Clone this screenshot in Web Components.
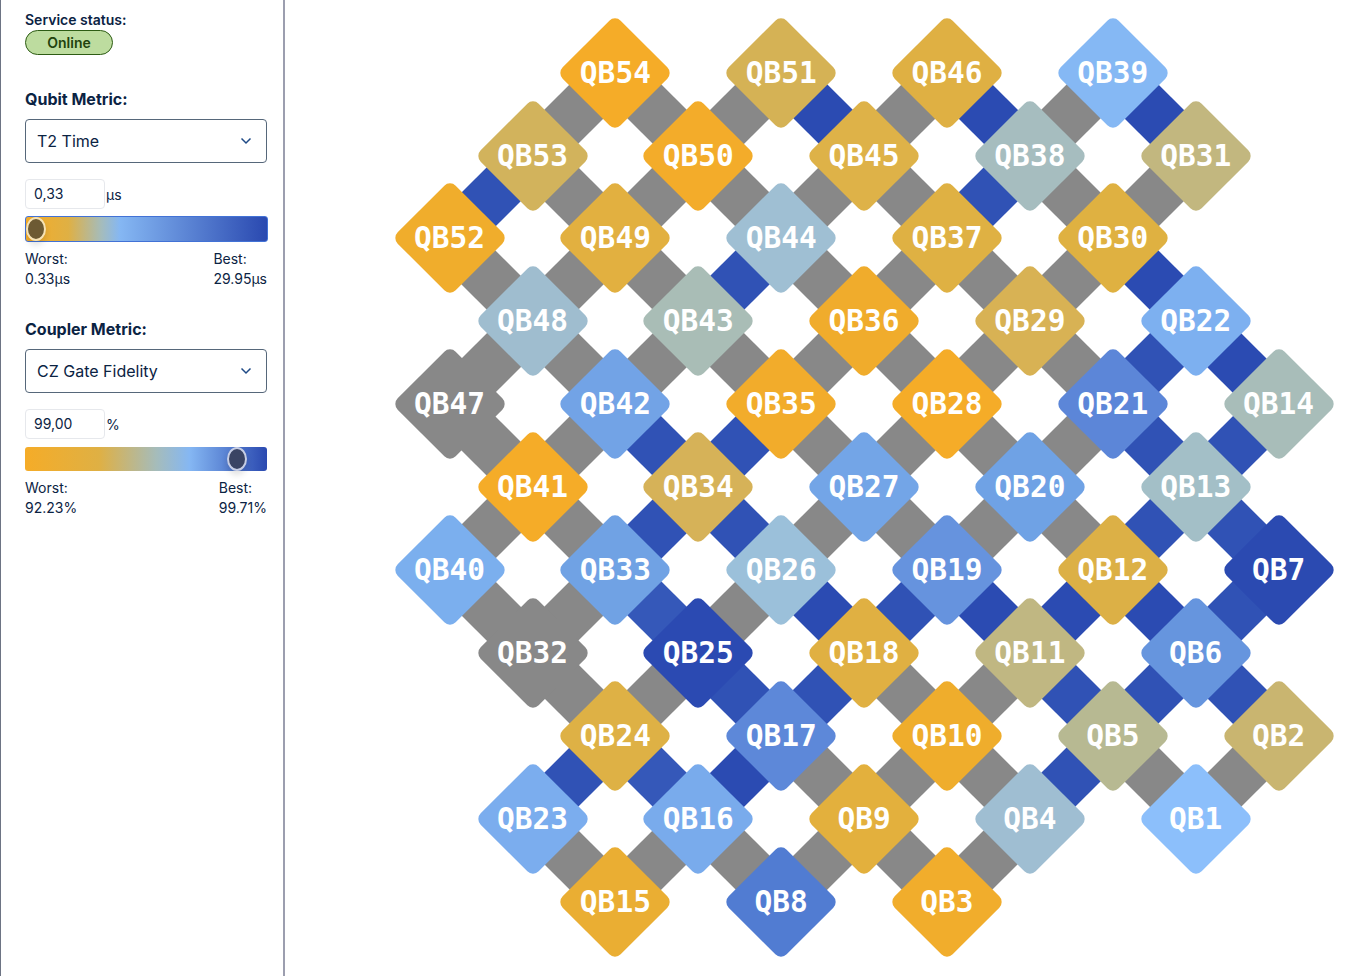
<!DOCTYPE html>
<html>
<head>
<meta charset="utf-8">
<title>Chip map</title>
<style>
  html, body { margin: 0; height: 100%; background: #fff; }
  body { display: flex; font-family: "Inter", "Liberation Sans", sans-serif; color: #0b2343; overflow: hidden; }
</style>
</head>
<body>
  <side-bar>
    <status-pill>Online</status-pill>
    <metric-panel heading="Qubit Metric:" choice="T2 Time" value="0,33" unit="µs" stop="39" thumb="10"
      worst="0.33µs" best="29.95µs" focused></metric-panel>
    <metric-panel heading="Coupler Metric:" choice="CZ Gate Fidelity" value="99,00" unit="%" stop="68" thumb="212"
      thumb-color="#3a4464" ring="#c6cde4" worst="92.23%" best="99.71%"></metric-panel>
  </side-bar>
  <chip-map></chip-map>

<script>
// Sidebar shell
class SideBar extends HTMLElement {
  constructor() {
    super();
    this.attachShadow({ mode: "open" }).innerHTML = `
      <style>
        :host {
          display: block;
          box-sizing: border-box;
          width: 285px;
          height: 976px;
          flex: none;
          padding: 12px 16px 0 24px;
          border-left: 1px solid #6d7484;
          border-right: 2px solid #9c9eaf;
        }
        .label { font-size: 14px; font-weight: 600; line-height: 16px; }
      </style>
      <div class="label">Service status:</div>
      <slot></slot>
    `;
  }
}

class StatusPill extends HTMLElement {
  constructor() {
    super();
    this.attachShadow({ mode: "open" }).innerHTML = `
      <style>
        :host {
          display: flex;
          align-items: center;
          justify-content: center;
          box-sizing: border-box;
          width: 88px;
          height: 25px;
          margin-top: 2px;
          background: #bddc9f;
          border: 1px solid #2d5c14;
          border-radius: 13px;
          color: #22430d;
          font-size: 14px;
          font-weight: 600;
        }
      </style>
      <slot></slot>
    `;
  }
}

// One metric block: heading, dropdown, threshold input, gradient slider, worst/best
class MetricPanel extends HTMLElement {
  connectedCallback() {
    const a = (n, d) => this.getAttribute(n) || d;
    const p = Number(a("stop", 50));
    const thumb = Number(a("thumb", 0));
    const focused = this.hasAttribute("focused");
    this.attachShadow({ mode: "open" }).innerHTML = `
      <style>
        :host { display: block; margin-top: 36px; }
        :host(:last-child) { margin-top: 32px; }
        h2 { margin: 0; font-size: 16px; font-weight: 700; line-height: 16px; height: 24px; padding-top: 0; }
        .select {
          display: flex;
          align-items: center;
          justify-content: space-between;
          box-sizing: border-box;
          width: 242px;
          height: 44px;
          padding: 0 14px 0 11px;
          background: #fff;
          border: 1px solid #56677a;
          border-radius: 4px;
          font-size: 16px;
          margin-top: 4px;
        }
        .value { display: flex; align-items: center; margin-top: 16px; font-size: 14px; }
        .input {
          box-sizing: border-box;
          width: 80px;
          height: 30px;
          padding: 0 8px;
          line-height: 28px;
          border: 1px solid #e6e8ec;
          border-radius: 4px;
        }
        .unit { margin-left: 1px; }
        .track {
          position: relative;
          box-sizing: border-box;
          width: ${focused ? 243 : 242}px;
          height: ${focused ? 26 : 24}px;
          margin-top: ${focused ? 7 : 8}px;
          border-radius: 3px;
          background: linear-gradient(90deg, #f5ac28 0%, #dfb044 ${p * 0.45}%, #a5bcbb ${p * 0.8}%, #85b7f3 ${p}%, #2a49b0 100%);
          ${focused ? "border: 1.5px solid #4272d6;" : ""}
        }
        .thumb {
          position: absolute;
          left: ${thumb - 10}px;
          top: 50%;
          box-sizing: border-box;
          width: 20px;
          height: 24px;
          margin-top: -12px;
          border-radius: 50%;
          background: ${a("thumb-color", "#6d5a33")};
          border: 2px solid ${a("ring", "#f6e2b4")};
          box-shadow: 0 4px 6px rgba(0, 0, 0, 0.12);
        }
        .ends { display: flex; justify-content: space-between; width: 242px; margin-top: 7px; font-size: 14px; line-height: 20px; }
      </style>
      <h2>${a("heading")}</h2>
      <div class="select">
        <span>${a("choice")}</span>
        <svg width="12" height="8" viewBox="0 0 12 8"><path d="M1.5 1.5 6 6l4.5-4.5" fill="none" stroke="#1f4a86" stroke-width="1.5"/></svg>
      </div>
      <div class="value"><div class="input">${a("value")}</div><span class="unit">${a("unit")}</span></div>
      <div class="track"><div class="thumb"></div></div>
      <div class="ends">
        <div>Worst:<br>${a("worst")}</div>
        <div>Best:<br>${a("best")}</div>
      </div>
    `;
  }
}

// Grid pitch of the chip, in pixels
const STEP = 82.9;
const X0 = 164.6;
const Y0 = 72.6;

class QubitNode extends HTMLElement {
  connectedCallback() {
    const col = Number(this.getAttribute("col"));
    const row = Number(this.getAttribute("row"));
    this.attachShadow({ mode: "open" }).innerHTML = `
      <style>
        :host {
          position: absolute;
          left: ${X0 + col * STEP - 41}px;
          top: ${Y0 + row * STEP - 41}px;
          width: 82px;
          height: 82px;
          display: flex;
          align-items: center;
          justify-content: center;
          font: bold 29.5px "DejaVu Sans Mono", monospace;
          color: #fff;
        }
        .shape {
          position: absolute;
          inset: 0;
          border-radius: 8px;
          background: ${this.getAttribute("color")};
          transform: rotate(45deg);
        }
        span { position: relative; }
      </style>
      <div class="shape"></div>
      <span><slot></slot></span>
    `;
  }
}

class CouplerLink extends HTMLElement {
  connectedCallback() {
    // col,row is the upper end; dir is -1 (down left) or 1 (down right)
    const col = Number(this.getAttribute("col"));
    const row = Number(this.getAttribute("row"));
    const dir = Number(this.getAttribute("dir"));
    const cx = X0 + (col + dir / 2) * STEP;
    const cy = Y0 + (row + 0.5) * STEP;
    this.attachShadow({ mode: "open" }).innerHTML = `
      <style>
        :host {
          position: absolute;
          left: ${cx - 24}px;
          top: ${cy - 45}px;
          width: 48px;
          height: 90px;
          background: ${this.getAttribute("color")};
          transform: rotate(${dir * -45}deg);
        }
      </style>
    `;
  }
}

const NODES = [
  [54,2,0,"#f5ac28"],[51,4,0,"#d5b255"],[46,6,0,"#dfb043"],[39,8,0,"#85b8f4"],
  [53,1,1,"#d2b35c"],[50,3,1,"#f3ac2a"],[45,5,1,"#deb248"],[38,7,1,"#a6bdbf"],[31,9,1,"#c2b77f"],
  [52,0,2,"#f0ad2c"],[49,2,2,"#e2b040"],[44,4,2,"#9fbfd3"],[37,6,2,"#dfb143"],[30,8,2,"#dfb141"],
  [48,1,3,"#9fbdcf"],[43,3,3,"#a9bdb6"],[36,5,3,"#f0ac2c"],[29,7,3,"#d8b254"],[22,9,3,"#7db0f0"],
  [47,0,4,"#888888"],[42,2,4,"#72a3e6"],[35,4,4,"#f2ac2b"],[28,6,4,"#f5ac28"],[21,8,4,"#5c86d8"],[14,10,4,"#a8bdb9"],
  [41,1,5,"#f5ac28"],[34,3,5,"#d6b258"],[27,5,5,"#73a5e7"],[20,7,5,"#6fa2e5"],[13,9,5,"#a3bfc7"],
  [40,0,6,"#7bafee"],[33,2,6,"#70a2e4"],[26,4,6,"#9bc0da"],[19,6,6,"#6693de"],[12,8,6,"#dcb046"],[7,10,6,"#2b4ab1"],
  [32,1,7,"#888888"],[25,3,7,"#2b4ab2"],[18,5,7,"#e0b042"],[11,7,7,"#c0b782"],[6,9,7,"#6695de"],
  [24,2,8,"#deb145"],[17,4,8,"#5d88d9"],[10,6,8,"#efad2c"],[5,8,8,"#b7b992"],[2,10,8,"#c9b570"],
  [23,1,9,"#7badee"],[16,3,9,"#79abec"],[9,5,9,"#e3b03d"],[4,7,9,"#9fbed2"],[1,9,9,"#8cbffb"],
  [15,2,10,"#eaae33"],[8,4,10,"#517cd2"],[3,6,10,"#f1ad2c"]
];

// Couplers that are not grey: "upper-lower": colour
const D = "#2b4bb2", M = "#3052b5", L = "#3558b9";
const BLUE = {
  "51-45":D,"46-38":D,"39-31":D,"53-52":M,"38-37":M,"44-43":M,"30-22":D,
  "22-21":M,"22-14":D,"42-34":M,"35-34":M,"21-13":M,"14-13":M,
  "34-33":M,"34-26":M,"13-12":M,"13-7":M,
  "33-25":L,"26-18":D,"19-18":M,"19-11":D,"12-11":D,"12-6":D,"7-6":M,
  "25-17":M,"18-17":M,"11-5":M,"6-5":M,"6-2":M,
  "24-23":M,"24-16":L,"17-16":D,"5-4":M
};

class ChipMap extends HTMLElement {
  connectedCallback() {
    const root = this.attachShadow({ mode: "open" });
    root.innerHTML = `
      <style>
        :host { display: block; position: relative; flex: 1; height: 976px; overflow: hidden; }
      </style>
    `;
    const at = {};
    NODES.forEach(n => { at[n[1] + "," + n[2]] = n; });
    // couplers first so the nodes lie on top of them
    NODES.forEach(([id, col, row]) => {
      [-1, 1].forEach(dir => {
        const other = at[(col + dir) + "," + (row + 1)];
        if (!other) return;
        const link = document.createElement("coupler-link");
        link.setAttribute("col", col);
        link.setAttribute("row", row);
        link.setAttribute("dir", dir);
        link.setAttribute("color", BLUE[id + "-" + other[0]] || "#888888");
        root.appendChild(link);
      });
    });
    NODES.forEach(([id, col, row, color]) => {
      const node = document.createElement("qubit-node");
      node.setAttribute("col", col);
      node.setAttribute("row", row);
      node.setAttribute("color", color);
      node.textContent = "QB" + id;
      root.appendChild(node);
    });
  }
}

customElements.define("side-bar", SideBar);
customElements.define("status-pill", StatusPill);
customElements.define("metric-panel", MetricPanel);
customElements.define("qubit-node", QubitNode);
customElements.define("coupler-link", CouplerLink);
customElements.define("chip-map", ChipMap);
</script>
</body>
</html>
